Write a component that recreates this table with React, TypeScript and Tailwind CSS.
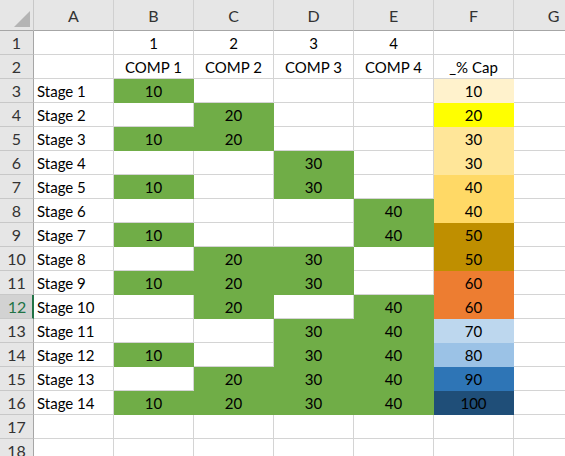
import React from "react";

const COLS = ["A", "B", "C", "D", "E", "F", "G"];

const FILL: Record<string, string> = {
  green: "bg-[#70ad47] border-[#70ad47]",
  c10: "bg-[#fff2cc] border-[#fff2cc]",
  c20: "bg-[#ffff00] border-[#ffff00]",
  c30: "bg-[#ffe699] border-[#ffe699]",
  c40: "bg-[#ffd966] border-[#ffd966]",
  c50: "bg-[#bf8f00] border-[#bf8f00]",
  c60: "bg-[#ed7d31] border-[#ed7d31]",
  c70: "bg-[#bdd7ee] border-[#bdd7ee]",
  c80: "bg-[#9bc2e6] border-[#9bc2e6]",
  c90: "bg-[#2e75b6] border-[#2e75b6]",
  c100: "bg-[#1f4e78] border-[#1f4e78]",
};

type Cell = { v?: string | number; fill?: string; align?: "left" | "center" };

// stage label, which comps are set, cap value
const stages: [number, number[], number][] = [
  [1, [1], 10],
  [2, [2], 20],
  [3, [1, 2], 30],
  [4, [3], 30],
  [5, [1, 3], 40],
  [6, [4], 40],
  [7, [1, 4], 50],
  [8, [2, 3], 50],
  [9, [1, 2, 3], 60],
  [10, [2, 4], 60],
  [11, [3, 4], 70],
  [12, [1, 3, 4], 80],
  [13, [2, 3, 4], 90],
  [14, [1, 2, 3, 4], 100],
];

function buildRows(): Cell[][] {
  const rows: Cell[][] = [];
  rows.push([{}, { v: 1 }, { v: 2 }, { v: 3 }, { v: 4 }, {}, {}]);
  rows.push([{}, { v: "COMP 1" }, { v: "COMP 2" }, { v: "COMP 3" }, { v: "COMP 4" }, { v: "_% Cap" }, {}]);
  for (const [n, comps, cap] of stages) {
    const row: Cell[] = [{ v: `Stage ${n}`, align: "left" }];
    for (let c = 1; c <= 4; c++) {
      row.push(comps.includes(c) ? { v: c * 10, fill: "green" } : {});
    }
    row.push({ v: cap, fill: `c${cap}` });
    row.push({});
    rows.push(row);
  }
  rows.push([{}, {}, {}, {}, {}, {}, {}]);
  rows.push([{}, {}, {}, {}, {}, {}, {}]);
  return rows;
}

export default function App() {
  const rows = buildRows();
  const activeRow = 12;

  return (
    <div
      className="w-[565px] h-[456px] overflow-hidden bg-white text-[15px] text-black"
      style={{ fontFamily: "Lato, 'Liberation Sans', sans-serif" }}
    >
      <div className="grid grid-cols-[34px_repeat(7,80px)] grid-rows-[31px_repeat(18,24px)] w-max">
        {/* corner */}
        <div className="relative bg-[#e6e6e6] border-r border-b border-r-[#c8c8c8] border-b-[#a6a6a6]">
          <svg className="absolute left-[14px] top-[11px]" width="16" height="16" viewBox="0 0 16 16">
            <polygon points="16,0 16,16 0,16" fill="#b4b4b4" />
          </svg>
        </div>
        {COLS.map((c) => (
          <div
            key={c}
            className="flex items-center justify-center bg-[#e6e6e6] border-r border-b border-r-[#d0d0d0] border-b-[#a6a6a6] text-[#333333] text-[16px] pt-[1px]"
          >
            {c}
          </div>
        ))}

        {rows.map((row, i) => {
          const n = i + 1;
          const active = n === activeRow;
          return (
            <React.Fragment key={n}>
              <div
                className={
                  active
                    ? "flex items-end justify-center bg-[#d2d2d2] border-b border-b-[#c8c8c8] border-r-2 border-r-[#217346] text-[#217346] text-[16px] leading-[22px] pl-[2px]"
                    : "flex items-end justify-center bg-[#e6e6e6] border-b border-r border-b-[#c8c8c8] border-r-[#a6a6a6] text-[#333333] text-[16px] leading-[22px]"
                }
              >
                {n}
              </div>
              {row.map((cell, j) => (
                <div
                  key={j}
                  className={
                    "flex items-end border-r border-b leading-[21px] whitespace-nowrap " +
                    (cell.fill ? FILL[cell.fill] : "border-[#d4d4d4]") +
                    (cell.align === "left" ? " justify-start pl-[3px]" : " justify-center")
                  }
                >
                  {cell.v ?? ""}
                </div>
              ))}
            </React.Fragment>
          );
        })}
      </div>
    </div>
  );
}
